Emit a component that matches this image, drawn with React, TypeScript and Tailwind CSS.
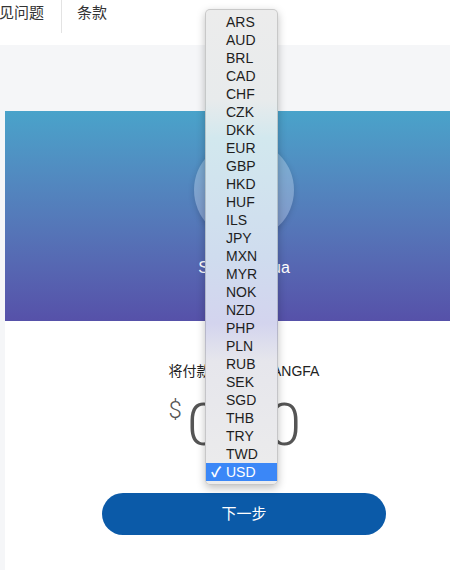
import React from "react";

const currencies = [
  "ARS", "AUD", "BRL", "CAD", "CHF", "CZK", "DKK", "EUR", "GBP", "HKD",
  "HUF", "ILS", "JPY", "MXN", "MYR", "NOK", "NZD", "PHP", "PLN", "RUB",
  "SEK", "SGD", "THB", "TRY", "TWD", "USD",
];

const sans = "font-['Liberation_Sans','Noto_Sans_CJK_SC',sans-serif]";

// the open <select> menu, tinted like a blurred backdrop of the card behind it
const CurrencyMenu = ({ selected }: { selected: string }) => (
  <div className="absolute left-[205px] top-[9px] w-[73px] rounded-[5px] border border-black/15 bg-[linear-gradient(to_bottom,#ececec_0%,#e8ebec_19%,#d2e8ee_27%,#cfdcee_52%,#d3d4ee_66%,#e6e6ec_74%,#ececec_100%)] shadow-[0_3px_8px_rgba(0,0,0,0.25)] py-[3px]">
    <ul>
      {currencies.map((c) => (
        <li
          key={c}
          className={
            c === selected
              ? "relative h-[18px] pl-[20px] text-[14px] leading-[18px] bg-[#3b87f7] text-white"
              : "h-[18px] pl-[20px] text-[14px] leading-[18px] text-[#1e1e1e]"
          }
        >
          {c === selected && (
            <span className="absolute left-[5px] top-0 text-[14px] font-bold">✓</span>
          )}
          {c}
        </li>
      ))}
    </ul>
  </div>
);

const App = () => {
  return (
    <div className={`relative w-[450px] h-[570px] overflow-hidden bg-[#f5f6f8] ${sans}`}>
      {/* Top nav */}
      <div className="h-[45px] bg-white flex items-start text-[15px] text-[#333]">
        <div className="-ml-[16px] pr-[17px] h-[33px] leading-[26px] border-r border-[#e3e3e3]">
          常见问题
        </div>
        <div className="pl-[15px] leading-[26px]">条款</div>
      </div>

      {/* Gray band */}
      <div className="h-[66px]" />

      {/* Content panel */}
      <div className="ml-[5px] w-[478px] h-[460px] bg-white flex flex-col items-center">
        <div className="w-full h-[210px] bg-gradient-to-b from-[#49a3ca] to-[#5651a9] flex flex-col items-center">
          <div className="mt-[29px] w-[100px] h-[100px] rounded-full bg-white/25 shadow-[0_2px_6px_rgba(0,0,0,0.15)]" />
          <div className="mt-[16px] text-[16px] text-white">Sun Xiaohua</div>
        </div>

        <div className="mt-[40px] text-[14px] text-[#222] leading-[20px]">
          将付款给 SU HUANGFA
        </div>

        <div className="relative mt-[8px] text-[60px] leading-[72px] font-light text-[#555] font-['Roboto',sans-serif]">
          <span className="absolute right-full top-[6px] mr-[5px] text-[24px] leading-[30px]">$</span>
          0.00
        </div>

        <button className="mt-[32px] w-[284px] h-[42px] rounded-full bg-[#0b5aa8] text-white text-[15px]">
          下一步
        </button>
      </div>

      <CurrencyMenu selected="USD" />
    </div>
  );
};

export default App;
